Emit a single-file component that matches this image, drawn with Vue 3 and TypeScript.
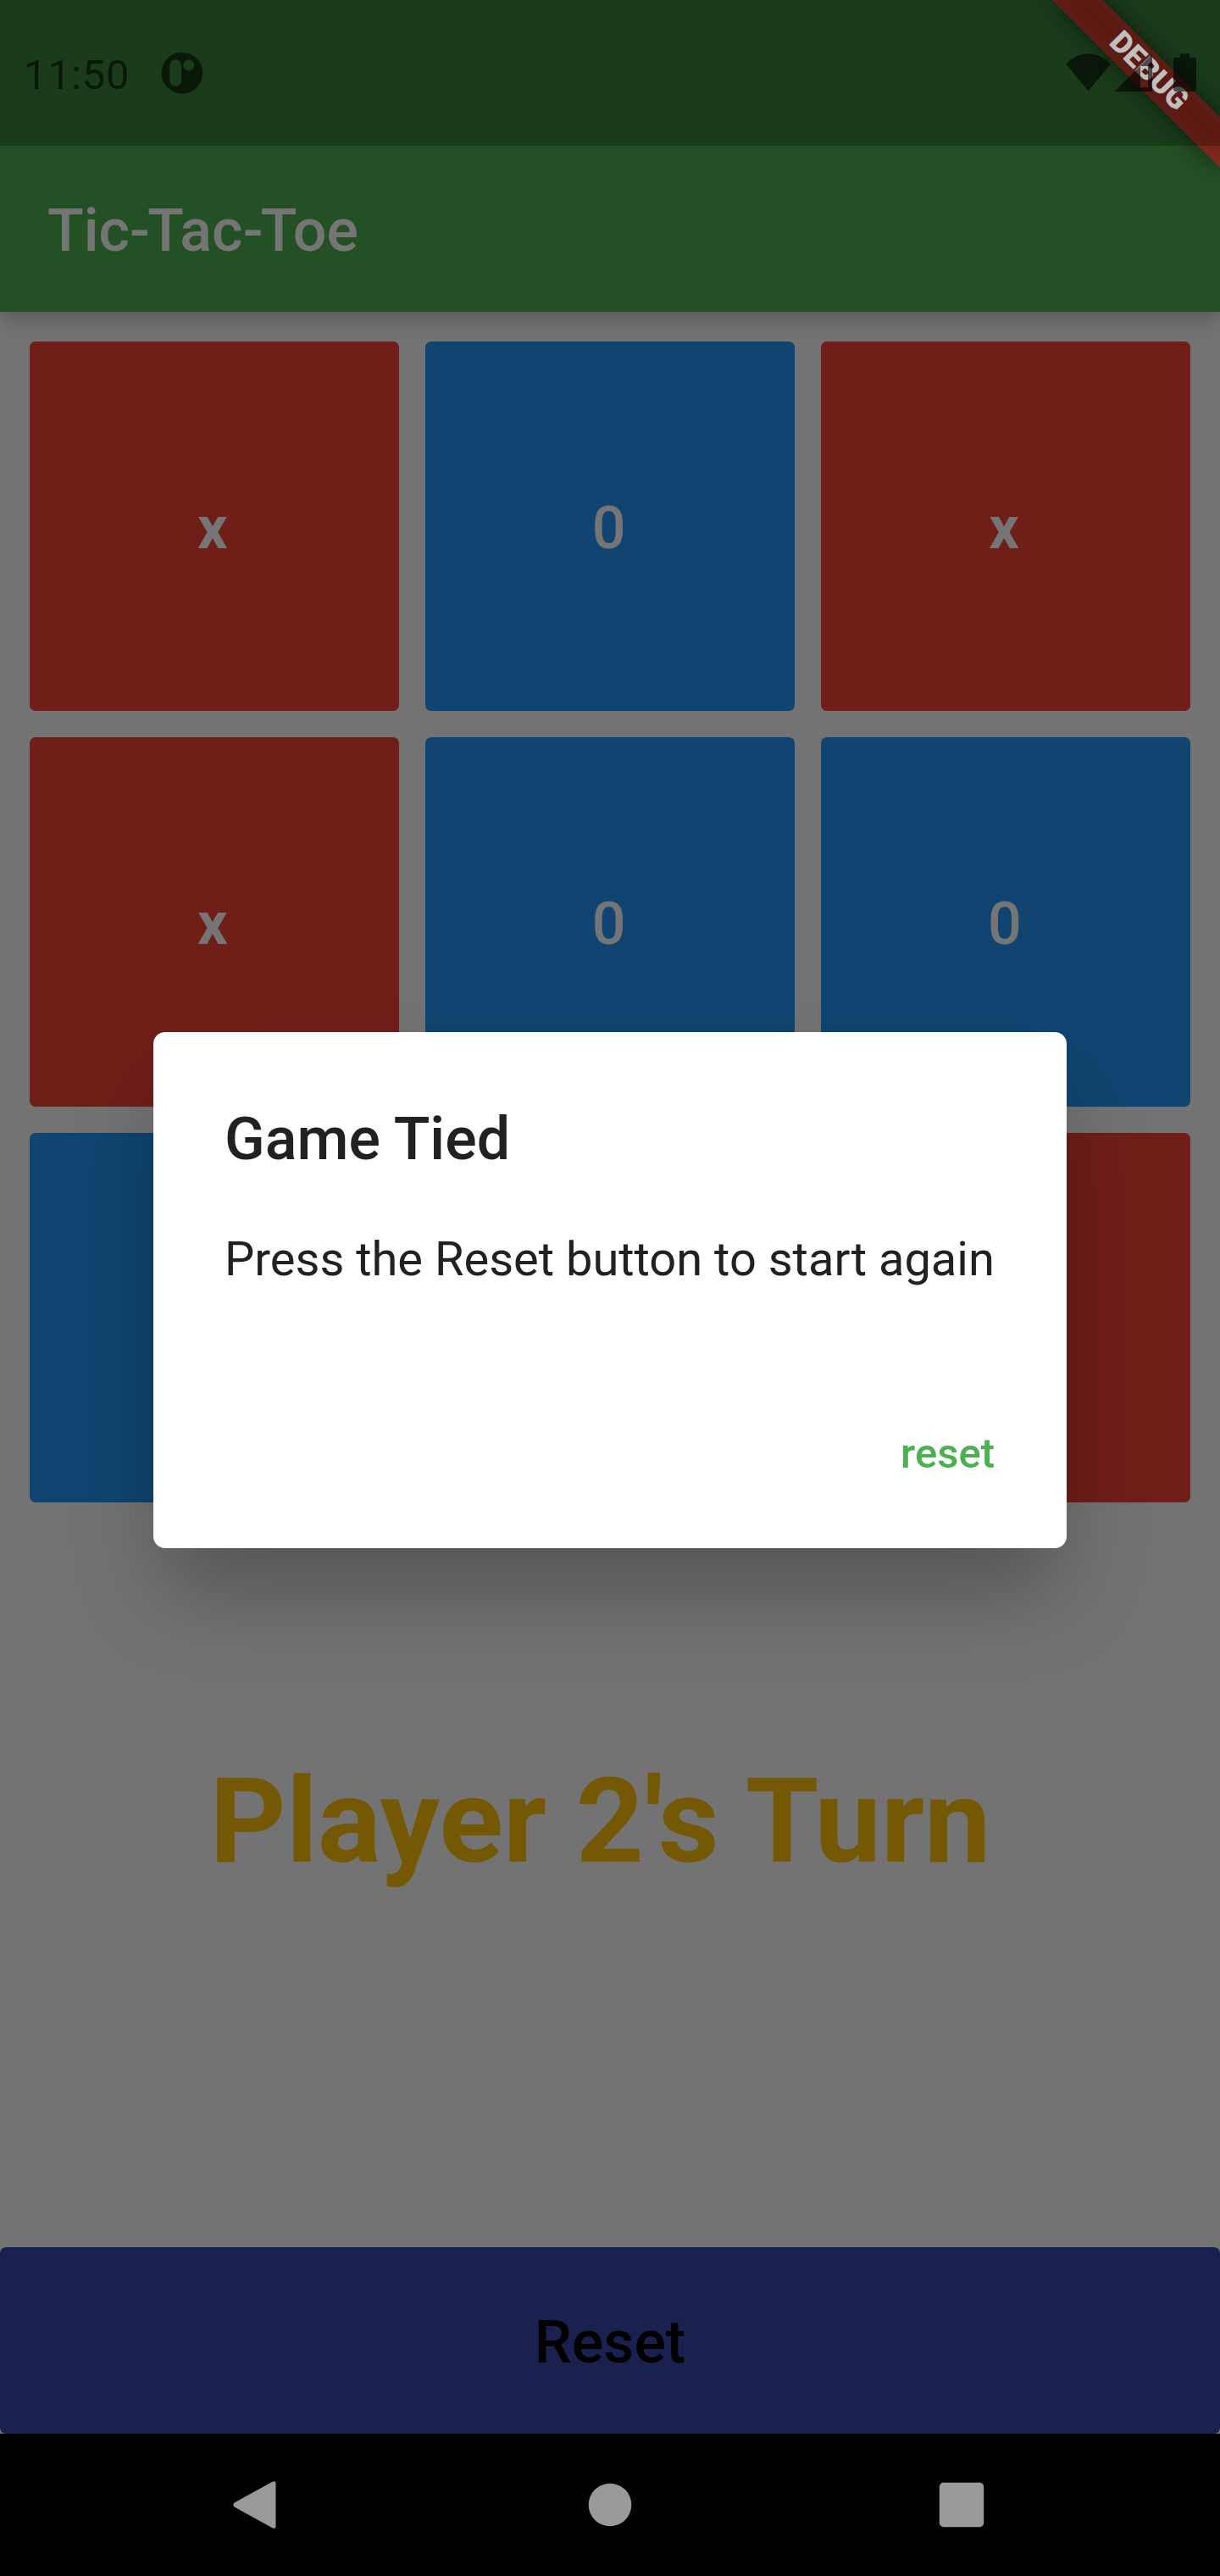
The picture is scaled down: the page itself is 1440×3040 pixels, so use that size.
<script setup lang="ts">
type Mark = 'x' | '0'

const board: Mark[] = ['x', '0', 'x', 'x', '0', '0', '0', 'x', 'x']
</script>

<template>
  <div class="device">
    <div class="screen">
      <header class="app-bar">
        <h1 class="app-title">Tic<span class="hyphen">-</span>Tac<span class="hyphen">-</span>Toe</h1>
      </header>

      <main class="board">
        <button
          v-for="(mark, index) in board"
          :key="index"
          class="tile"
          :class="mark === 'x' ? 'tile-x' : 'tile-o'"
        ><span class="mark">{{ mark }}</span></button>
      </main>

      <p class="turn">Player 2's Turn</p>

      <button class="reset-bar">Reset</button>
    </div>

    <div class="scrim">
      <section class="dialog" role="dialog">
        <h2 class="dialog-title">Game Tied</h2>
        <p class="dialog-body">Press the Reset button to start again</p>
        <div class="dialog-actions">
          <button class="dialog-action">reset</button>
        </div>
      </section>
    </div>

    <div class="debug-clip">
      <div class="debug-strip debug-shadow"></div>
      <div class="debug-strip debug-banner"><span class="debug-text">DEBUG</span></div>
    </div>

    <div class="status-bar">
      <span class="clock">11:50</span>
      <svg class="app-icon" width="50" height="50" viewBox="0 0 50 50">
        <path
          fill-rule="evenodd"
          d="M25 .7a24.4 24.4 0 1 0 0 48.8A24.4 24.4 0 0 0 25 .7ZM17.2 9.2a6.9 6.9 0 0 1 6.9 6.9v17.8a6.9 6.9 0 0 1-13.8 0V16.1a6.9 6.9 0 0 1 6.9-6.9ZM32.8 9.3a6.6 6.6 0 1 1 0 13.2a6.6 6.6 0 0 1 0-13.2Z"
        />
      </svg>
      <div class="status-icons">
        <svg width="54" height="46" viewBox="0 0 54 46">
          <path d="M0 12.4C7.500 5 16.500 .4 26.500 .4s19 4.600 26.500 12L26.500 44.500Z" />
        </svg>
        <svg width="46" height="46" viewBox="0 0 46 46">
          <path fill-rule="evenodd" d="M45 .8V45H.300ZM31 15V40.300H40V15Z" />
        </svg>
        <svg width="28" height="46" viewBox="0 0 28 46">
          <path d="M9 .200h11V5H25a3 3 0 0 1 3 3V42a3 3 0 0 1-3 3H4a3 3 0 0 1-3-3V8a3 3 0 0 1 3-3H9Z" />
        </svg>
      </div>
    </div>

    <nav class="nav-bar">
      <svg width="52" height="58" viewBox="0 0 52 58">
        <path d="M1.600 26.500L46.500 1.700Q50.500 0 50.500 4V54Q50.500 58 46.500 56.300L1.600 31.500Q-1 29 1.600 26.500Z" />
      </svg>
      <svg class="home" width="52" height="52" viewBox="0 0 52 52">
        <circle cx="26" cy="26" r="25.300" />
      </svg>
      <svg width="54" height="54" viewBox="0 0 54 54">
        <rect x=".8" y=".8" width="52.400" height="52.400" rx="5" />
      </svg>
    </nav>
  </div>
</template>

<style>
body {
  margin: 0;
}
</style>

<style scoped>
.device {
  position: relative;
  display: flex;
  flex-direction: column;
  width: 1440px;
  height: 3040px;
  overflow: hidden;
  background: #000;
  font-family: Roboto, sans-serif;
}

h1,
h2,
p {
  margin: 0;
}

button {
  margin: 0;
  padding: 0;
  border: 0;
  font-family: inherit;
}

.screen {
  display: flex;
  flex-direction: column;
  height: 2872px;
  background: #fafafa;
}

.app-bar {
  flex: none;
  display: flex;
  align-items: center;
  height: 196px;
  padding: 172px 56px 0;
  background: #4caf50;
  box-shadow: 0 9px 20px rgba(0, 0, 0, 0.22);
}

.app-title {
  padding-top: 4px;
  color: #fff;
  font-size: 70px;
  font-weight: 500;
  line-height: 82px;
}

.hyphen {
  letter-spacing: -2.6px;
}

.board {
  flex: none;
  display: grid;
  grid-template-columns: repeat(3, 1fr);
  grid-auto-rows: 435.67px;
  gap: 31.5px;
  padding: 35px;
}

.tile {
  display: flex;
  align-items: center;
  justify-content: center;
  border-radius: 7px;
  color: #fff;
  font-size: 70px;
  line-height: 82px;
}

.tile-x {
  background: #f44336;
  font-weight: 700;
}

.tile-o {
  background: #2196f3;
  font-weight: 500;
}

.mark {
  padding-top: 4px;
  letter-spacing: 2.6px;
}

.tile-x .mark {
  letter-spacing: 4px;
}

.turn {
  flex: 1;
  display: flex;
  align-items: center;
  justify-content: center;
  padding: 0 23px 162px 0;
  color: #ffc107;
  font-size: 140px;
  font-weight: 700;
  line-height: 164px;
}

.reset-bar {
  flex: none;
  height: 220.5px;
  padding-top: 4px;
  border-radius: 7px;
  background: #3949ab;
  color: #000;
  font-size: 70px;
  font-weight: 500;
  line-height: 82px;
}

.scrim {
  position: absolute;
  inset: 0 0 168px;
  display: flex;
  align-items: center;
  justify-content: center;
  padding-top: 172px;
  background: rgba(0, 0, 0, 0.54);
}

.dialog {
  box-sizing: border-box;
  width: 1078px;
  height: 609px;
  padding: 84px 84px 0;
  border-radius: 14px;
  background: #fff;
  color: #212121;
  box-shadow: 0 60px 105px -10px rgba(0, 0, 0, 0.27);
}

.dialog-title {
  font-size: 70px;
  font-weight: 500;
  line-height: 84px;
}

.dialog-body {
  padding-top: 67px;
  font-size: 56px;
  line-height: 66px;
  white-space: nowrap;
}

.dialog-actions {
  display: flex;
  justify-content: flex-end;
  padding-top: 168px;
}

.dialog-action {
  margin-right: 1px;
  background: none;
  color: #4caf50;
  font-size: 49px;
  font-weight: 500;
  line-height: 58px;
}

.debug-clip {
  position: absolute;
  top: 0;
  right: 0;
  width: 280px;
  height: 280px;
  overflow: hidden;
}

.debug-strip {
  position: absolute;
  top: 98px;
  left: 140px;
  width: 280px;
  height: 42px;
  transform: rotate(45deg);
  transform-origin: 140px -98px;
}

.debug-shadow {
  background: rgba(0, 0, 0, 0.5);
  filter: blur(14px);
}

.debug-banner {
  display: flex;
  align-items: center;
  justify-content: center;
  background: rgba(183, 28, 28, 0.627);
}

.debug-text {
  padding-bottom: 2px;
  color: #fff;
  font-size: 35.7px;
  font-weight: 900;
  line-height: 36px;
}

.status-bar {
  position: absolute;
  inset: 0 0 auto;
  box-sizing: border-box;
  display: flex;
  align-items: center;
  height: 172px;
  padding: 0 28px;
  background: rgba(0, 0, 0, 0.25);
  color: rgba(0, 0, 0, 0.6);
}

.status-bar svg {
  fill: rgba(0, 0, 0, 0.6);
}

.clock {
  padding-top: 5px;
  font-size: 49px;
  line-height: 58px;
  letter-spacing: 0.6px;
}

.app-icon {
  margin-left: 37.3px;
}

.status-icons {
  display: flex;
  gap: 3px;
  margin-left: auto;
}

.status-icons svg:last-child {
  margin-left: 20px;
}

.nav-bar {
  flex: none;
  display: flex;
  align-items: center;
  justify-content: space-between;
  height: 168px;
  padding: 0 278px 0 275px;
}

.nav-bar svg {
  fill: #999;
}

.nav-bar .home {
  margin-left: 5px;
}
</style>
